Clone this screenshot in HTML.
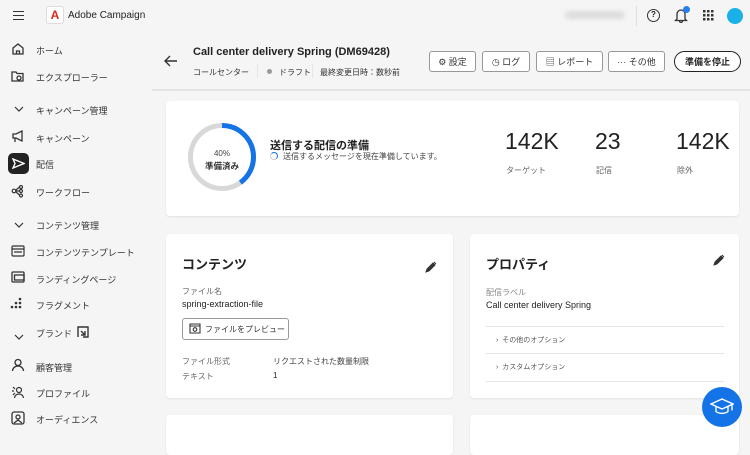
<!DOCTYPE html>
<html><head><meta charset="utf-8"><style>
*{margin:0;padding:0;box-sizing:border-box}
body{width:750px;height:437px;overflow:hidden;background:#f5f5f5;font-family:"Liberation Sans","Noto Sans CJK JP",sans-serif;color:#222;position:relative}
.a{position:absolute;white-space:nowrap}
.nav{font-size:9px;color:#333}
.card{position:absolute;background:#fff;border-radius:4px;box-shadow:0 1px 2px rgba(0,0,0,.08)}
.btn{position:absolute;top:51px;height:21px;border:1px solid #999;border-radius:3px;background:#fff;font-size:9px;color:#333;display:flex;align-items:center;justify-content:center;gap:4px}
.lbl{font-size:8px;color:#666}
</style></head><body>
<div class="a" style="left:13px;top:11px;width:11px;height:9px;border-top:1.5px solid #333;border-bottom:1.5px solid #333"><div style="margin-top:2.5px;border-top:1.5px solid #333"></div></div>
<div class="a" style="left:46px;top:6px;width:18px;height:18px;background:#fff;border:1px solid #ddd;border-radius:3px;color:#e1251b;font-weight:bold;font-size:12px;text-align:center;line-height:16px">A</div>
<div class="a" style="left:68px;top:10px;font-size:10px;color:#222">Adobe Campaign</div>
<div class="a" style="left:565px;top:11px;width:60px;height:8px;background:#ddd;border-radius:4px;filter:blur(2px)"></div>
<div class="a" style="left:636px;top:6px;height:20px;border-left:1px solid #ddd"></div>
<div class="a" style="left:647px;top:9px;width:13px;height:13px;border:1.5px solid #333;border-radius:50%;font-size:8px;text-align:center;line-height:10px;font-weight:bold">?</div>
<svg class="a" style="left:674px;top:8px" width="14" height="15" viewBox="0 0 14 15"><path d="M3 11V6a4 4 0 0 1 8 0v5l1.5 1.5h-11Z M5.5 13a1.5 1.5 0 0 0 3 0" fill="none" stroke="#333" stroke-width="1.3"/></svg>
<div class="a" style="left:683px;top:6px;width:7px;height:7px;background:#2680eb;border-radius:50%"></div>
<svg class="a" style="left:703px;top:10px" width="11" height="11"><g fill="#333"><rect x="0" y="0" width="2.5" height="2.5"/><rect x="4" y="0" width="2.5" height="2.5"/><rect x="8" y="0" width="2.5" height="2.5"/><rect x="0" y="4" width="2.5" height="2.5"/><rect x="4" y="4" width="2.5" height="2.5"/><rect x="8" y="4" width="2.5" height="2.5"/><rect x="0" y="8" width="2.5" height="2.5"/><rect x="4" y="8" width="2.5" height="2.5"/><rect x="8" y="8" width="2.5" height="2.5"/></g></svg>
<div class="a" style="left:727px;top:8px;width:16px;height:16px;background:#1ab0e8;border-radius:50%"></div>

<svg class="a" style="left:11px;top:42px" width="14" height="14" viewBox="0 0 14 14" fill="none" stroke="#333" stroke-width="1.3"><path d="M2 6L7 2l5 4v6H2Z M5.5 12V9h3v3"/></svg>
<div class="a nav" style="left:36px;top:44px">ホーム</div>
<svg class="a" style="left:11px;top:69px" width="14" height="14" viewBox="0 0 14 14" fill="none" stroke="#333" stroke-width="1.3"><path d="M1 3h4l1 1.5h6V12H1Z"/><circle cx="8" cy="9" r="2"/></svg>
<div class="a nav" style="left:36px;top:71px">エクスプローラー</div>
<svg class="a" style="left:14px;top:106px" width="10" height="6" viewBox="0 0 10 6" fill="none" stroke="#333" stroke-width="1.2"><path d="M1 1l4 4 4-4"/></svg>
<div class="a nav" style="left:36px;top:104px">キャンペーン管理</div>
<svg class="a" style="left:11px;top:130px" width="14" height="13" viewBox="0 0 14 13" fill="none" stroke="#333" stroke-width="1.3"><path d="M2 4h3l6-3v10L5 8H2Z M4 8v4"/></svg>
<div class="a nav" style="left:36px;top:132px">キャンペーン</div>
<div class="a" style="left:8px;top:153px;width:21px;height:21px;background:#222;border-radius:5px"></div>
<svg class="a" style="left:12px;top:158px" width="13" height="11" viewBox="0 0 13 11" fill="none" stroke="#fff" stroke-width="1.4"><path d="M1 1l11 4.5L1 10l2-4.5Z"/></svg>
<div class="a nav" style="left:36px;top:158px">配信</div>
<svg class="a" style="left:11px;top:185px" width="14" height="13" viewBox="0 0 14 13" fill="none" stroke="#333" stroke-width="1.2"><circle cx="3" cy="6" r="1.8"/><circle cx="10" cy="2" r="1.5"/><circle cx="10" cy="6" r="1.5"/><circle cx="10" cy="10.5" r="1.5"/><path d="M5 6h3.5M5 5l3.5-3M5 7l3.5 3"/></svg>
<div class="a nav" style="left:36px;top:186px">ワークフロー</div>
<svg class="a" style="left:14px;top:222px" width="10" height="6" viewBox="0 0 10 6" fill="none" stroke="#333" stroke-width="1.2"><path d="M1 1l4 4 4-4"/></svg>
<div class="a nav" style="left:36px;top:219px">コンテンツ管理</div>
<svg class="a" style="left:11px;top:245px" width="14" height="12" viewBox="0 0 14 12" fill="none" stroke="#333" stroke-width="1.2"><rect x="1" y="1" width="12" height="10" rx="1"/><path d="M1 4h12M3 7h8"/></svg>
<div class="a nav" style="left:36px;top:246px">コンテンツテンプレート</div>
<svg class="a" style="left:11px;top:271px" width="14" height="12" viewBox="0 0 14 12" fill="none" stroke="#333" stroke-width="1.3"><rect x="1" y="1" width="12" height="10" rx="1"/><rect x="3.5" y="4" width="9.5" height="5"/></svg>
<div class="a nav" style="left:36px;top:273px">ランディングページ</div>
<svg class="a" style="left:10px;top:297px" width="15" height="12" viewBox="0 0 15 12" fill="#333"><circle cx="2" cy="10" r="1.3"/><circle cx="6" cy="10" r="1.3"/><circle cx="10" cy="10" r="1.3"/><circle cx="6" cy="6" r="1.3"/><circle cx="10" cy="6" r="1.3"/><circle cx="10" cy="2" r="1.3"/></svg>
<div class="a nav" style="left:36px;top:299px">フラグメント</div>
<svg class="a" style="left:14px;top:334px" width="10" height="6" viewBox="0 0 10 6" fill="none" stroke="#333" stroke-width="1.2"><path d="M1 1l4 4 4-4"/></svg>
<div class="a nav" style="left:36px;top:327px">ブランド</div>
<svg class="a" style="left:77px;top:326px" width="12" height="12" viewBox="0 0 12 12" fill="none" stroke="#333" stroke-width="1.4"><path d="M1 11V1h10v10H6 M4 5l4 4M8 5v4H4"/></svg>
<svg class="a" style="left:11px;top:358px" width="14" height="14" viewBox="0 0 14 14" fill="none" stroke="#333" stroke-width="1.3"><circle cx="7" cy="4.5" r="3"/><path d="M1.5 13a5.5 5 0 0 1 11 0"/></svg>
<div class="a nav" style="left:36px;top:361px">顧客管理</div>
<svg class="a" style="left:10px;top:385px" width="16" height="14" viewBox="0 0 16 14" fill="none" stroke="#333" stroke-width="1.2"><circle cx="9" cy="5" r="2.5"/><path d="M4.5 13a4.5 4 0 0 1 9 0 M3 2l2 2M2 6l2 0M3 10l2-2"/></svg>
<div class="a nav" style="left:36px;top:387px">プロファイル</div>
<svg class="a" style="left:11px;top:411px" width="14" height="14" viewBox="0 0 14 14" fill="none" stroke="#333" stroke-width="1.3"><rect x="1" y="1" width="12" height="12" rx="2"/><circle cx="7" cy="6" r="2"/><path d="M3 12l4-3 4 3"/></svg>
<div class="a nav" style="left:36px;top:413px">オーディエンス</div>

<svg class="a" style="left:164px;top:55px" width="14" height="12" viewBox="0 0 14 12" fill="none" stroke="#333" stroke-width="1.4"><path d="M13 6H1M6 1L1 6l5 5"/></svg>
<div class="a" style="left:193px;top:46px;font-size:11px;font-weight:bold;color:#222">Call center delivery Spring (DM69428)</div>
<div class="a" style="left:193px;top:67px;font-size:8px;color:#333">コールセンター</div>
<div class="a" style="left:257px;top:64px;height:14px;border-left:1px solid #e5e5e5"></div>
<div class="a" style="left:267px;top:69px;width:5px;height:5px;background:#999;border-radius:50%"></div>
<div class="a" style="left:279px;top:67px;font-size:8px;color:#333">ドラフト</div>
<div class="a" style="left:312px;top:64px;height:14px;border-left:1px solid #e5e5e5"></div>
<div class="a" style="left:320px;top:67px;font-size:8px;color:#333">最終変更日時：数秒前</div>
<div class="btn" style="left:429px;width:47px">⚙ 設定</div>
<div class="btn" style="left:482px;width:48px">◷ ログ</div>
<div class="btn" style="left:536px;width:67px">▤ レポート</div>
<div class="btn" style="left:608px;width:57px">··· その他</div>
<div class="btn" style="left:674px;width:67px;border:1.5px solid #222;border-radius:11px;font-weight:bold;color:#222">準備を停止</div>
<div class="a" style="left:152px;top:89px;width:598px;border-top:2px solid #e3e3e3"></div>

<div class="card" style="left:166px;top:101px;width:573px;height:115px"></div>
<svg class="a" style="left:187px;top:122px" width="70" height="70" viewBox="0 0 70 70"><circle cx="35" cy="35" r="31.5" fill="none" stroke="#d8d8d8" stroke-width="5"/><circle cx="35" cy="35" r="31.5" fill="none" stroke="#1473e6" stroke-width="5" stroke-dasharray="79.2 200" transform="rotate(-90 35 35)"/></svg>
<div class="a" style="left:187px;top:149px;width:70px;text-align:center;font-size:8px;color:#444">40%</div>
<div class="a" style="left:187px;top:160px;width:70px;text-align:center;font-size:8.5px;font-weight:bold;color:#333">準備済み</div>
<div class="a" style="left:270px;top:137px;font-size:11px;font-weight:bold">送信する配信の準備</div>
<div class="a" style="left:270px;top:152px;width:8px;height:8px;border:1.3px solid #ccc;border-top-color:#1473e6;border-right-color:#1473e6;border-radius:50%"></div>
<div class="a" style="left:283px;top:151px;font-size:8px;color:#444">送信するメッセージを現在準備しています。</div>
<div class="a" style="left:505px;top:128px;font-size:23px;color:#222">142K</div>
<div class="a" style="left:506px;top:165px;font-size:8px;color:#666">ターゲット</div>
<div class="a" style="left:595px;top:128px;font-size:23px;color:#222">23</div>
<div class="a" style="left:596px;top:165px;font-size:8px;color:#666">記信</div>
<div class="a" style="left:676px;top:128px;font-size:23px;color:#222">142K</div>
<div class="a" style="left:677px;top:165px;font-size:8px;color:#666">除外</div>

<div class="card" style="left:166px;top:234px;width:287px;height:164px"></div>
<div class="a" style="left:182px;top:254px;font-size:13px;font-weight:bold">コンテンツ</div>
<svg class="a" style="left:425px;top:261px" width="12" height="12" viewBox="0 0 12 12"><path d="M1 11l1-3 6-6 2 2-6 6Z M9 1l2 2" fill="#333" stroke="#333"/></svg>
<div class="a lbl" style="left:182px;top:286px">ファイル名</div>
<div class="a" style="left:182px;top:299px;font-size:9px">spring-extraction-file</div>
<div class="a" style="left:182px;top:318px;width:107px;height:22px;border:1px solid #999;border-radius:3px;background:#fff"></div>
<svg class="a" style="left:189px;top:323px" width="12" height="11" viewBox="0 0 12 11" fill="none" stroke="#333" stroke-width="1.1"><path d="M1 1h10v9H1Z M1 3h10"/><circle cx="6" cy="6.5" r="1.8"/></svg>
<div class="a" style="left:205px;top:324px;font-size:8px;color:#333">ファイルをプレビュー</div>
<div class="a lbl" style="left:182px;top:356px">ファイル形式</div>
<div class="a lbl" style="left:273px;top:356px;color:#444">リクエストされた数量制限</div>
<div class="a lbl" style="left:182px;top:371px">テキスト</div>
<div class="a" style="left:273px;top:371px;font-size:8px">1</div>

<div class="card" style="left:470px;top:234px;width:269px;height:164px"></div>
<div class="a" style="left:486px;top:254px;font-size:13px;font-weight:bold">プロパティ</div>
<svg class="a" style="left:713px;top:254px" width="12" height="12" viewBox="0 0 12 12"><path d="M1 11l1-3 6-6 2 2-6 6Z M9 1l2 2" fill="#333" stroke="#333"/></svg>
<div class="a lbl" style="left:486px;top:287px;color:#888">配信ラベル</div>
<div class="a" style="left:486px;top:300px;font-size:9px">Call center delivery Spring</div>
<div class="a" style="left:486px;top:326px;width:238px;border-top:1px solid #e5e5e5"></div>
<div class="a" style="left:496px;top:335px;font-size:7px;color:#555">›&nbsp; その他のオプション</div>
<div class="a" style="left:486px;top:353px;width:238px;border-top:1px solid #e5e5e5"></div>
<div class="a" style="left:496px;top:362px;font-size:7px;color:#555">›&nbsp; カスタムオプション</div>
<div class="a" style="left:486px;top:381px;width:238px;border-top:1px solid #e5e5e5"></div>

<div class="card" style="left:166px;top:415px;width:287px;height:40px"></div>
<div class="card" style="left:470px;top:415px;width:269px;height:40px"></div>

<div class="a" style="left:702px;top:387px;width:40px;height:40px;background:#1473e6;border-radius:50%"></div>
<svg class="a" style="left:710px;top:396px" width="24" height="22" viewBox="0 0 24 22" fill="none" stroke="#fff" stroke-width="1.4"><path d="M1 8l11-5 11 5-11 5Z M6 10.5v5c3 2.5 9 2.5 12 0v-5 M22 8.5v6"/></svg>
</body></html>
